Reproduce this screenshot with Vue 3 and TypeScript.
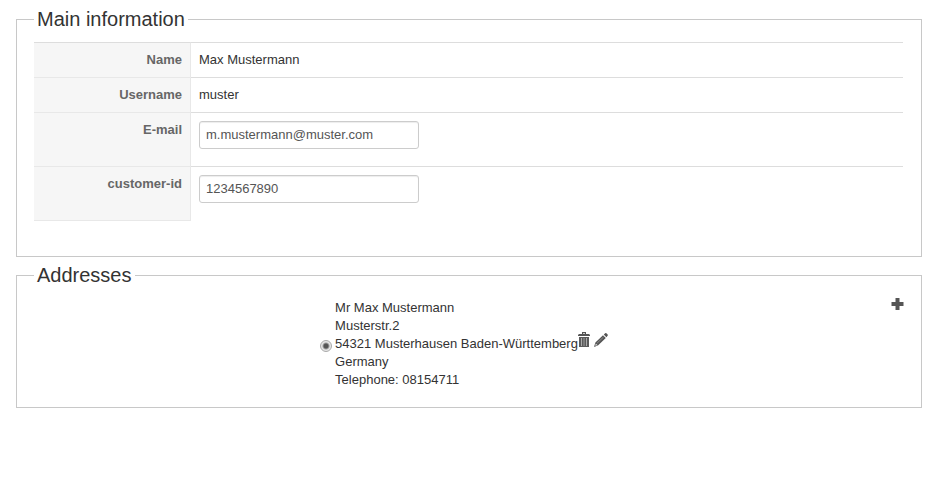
<script setup lang="ts">
import { ref } from 'vue'

const name = 'Max Mustermann'
const username = 'muster'
const email = ref('m.mustermann@muster.com')
const customerId = ref('1234567890')
const selected = ref('home')
</script>

<template>
  <main class="page">
    <fieldset class="panel main-info">
      <legend>Main information</legend>
      <table class="details">
        <tbody>
          <tr><th scope="row">Name</th><td>{{ name }}</td></tr>
          <tr><th scope="row">Username</th><td>{{ username }}</td></tr>
          <tr>
            <th scope="row"><label for="email">E-mail</label></th>
            <td><input id="email" v-model="email" class="field" type="text" /></td>
          </tr>
          <tr>
            <th scope="row"><label for="customer">customer-id</label></th>
            <td><input id="customer" v-model="customerId" class="field" type="text" /></td>
          </tr>
        </tbody>
      </table>
    </fieldset>

    <fieldset class="panel addresses">
      <legend>Addresses</legend>
      <div class="address-row">
        <div class="address">
          <input id="address-home" v-model="selected" class="radio" type="radio" name="address" value="home" />
          <label for="address-home" class="lines">
            <span>Mr Max Mustermann</span>
            <span>Musterstr.2</span>
            <span>54321 Musterhausen Baden-Württemberg</span>
            <span>Germany</span>
            <span>Telephone: 08154711</span>
          </label>
          <div class="actions">
            <button type="button" aria-label="Delete address">
              <svg width="12" height="16" viewBox="0 0 12 16">
                <path fill="#555" d="M4 0h4v2h3l1 1v1H0V3l1-1h3z" />
                <path fill="#ccc" d="M5 1h2v1H5z" />
                <path fill="#5a5a5a" d="M1 5h10v10H1z" />
                <path fill="#aaa" d="M3 6h1v8H3zM8 6h1v8H8z" />
                <path fill="#999" d="M5.5 6h1v8h-1z" />
              </svg>
            </button>
            <button type="button" aria-label="Edit address">
              <svg width="14" height="14" viewBox="0 0 14 14">
                <path fill="#555" d="M9 2.2L11.8 5 4.2 12.2 0 14l1.4-4.4zM9.8 1.5L11.2.3q.6-.5 1.2 0l1.2 1.2q.6.6 0 1.2l-1.2 1.5z" />
                <path stroke="#999" stroke-width=".8" d="M3 10.2l6.5-6.1" />
                <path fill="#ddd" d="M1.9 10.6l1.5 1.5-1.7.7-.5-.5z" />
              </svg>
            </button>
          </div>
        </div>
        <button type="button" class="add" aria-label="Add address">
          <svg width="13" height="12" viewBox="0 0 13 12">
            <path fill="#aaa" d="M4 0h5v4h4v4H9v4H4V8H0V4h4z" />
            <path fill="#555" d="M5 0h3v4h4v4H8v4H5V8H1V4h4z" />
          </svg>
        </button>
      </div>
    </fieldset>
  </main>
</template>

<style>
body {
  margin: 0;
  background: #fff;
}
</style>

<style scoped>
.page {
  padding: 9px 11px 0 16px;
  font: 13px/18px "Liberation Sans", Arial, sans-serif;
  color: #333;
}
.panel {
  margin: 0;
  min-width: 0;
  border: 1px solid #c8c8c8;
  padding: 13px 18px 35px 17px;
}
legend {
  padding: 0 3px;
  font-size: 20px;
  line-height: 20px;
}
.addresses {
  margin-top: 8px;
  padding: 13px 17px 18px;
}
.details {
  width: 100%;
  border-collapse: separate;
  border-spacing: 0;
}
th,
td {
  padding: 8px;
  border-top: 1px solid #ddd;
  vertical-align: top;
  text-align: left;
}
th {
  box-sizing: border-box;
  width: 157px;
  border-right: 1px solid #e8e8e8;
  background: #f6f6f6;
  color: #666;
  text-align: right;
}
tr + tr th {
  border-top-color: #e8e8e8;
}
tr:last-child th {
  border-bottom: 1px solid #e8e8e8;
}
.field {
  display: block;
  box-sizing: border-box;
  width: 220px;
  height: 28px;
  margin: 0 0 9px;
  padding: 3px 6px 5px;
  border: 1px solid #ccc;
  border-radius: 3px;
  box-shadow: inset 0 1px 1px rgba(0, 0, 0, 0.075);
  font: inherit;
  color: #555;
}
tr:last-child .field {
  margin-bottom: 10px;
}
.address-row {
  display: grid;
  grid-template-columns: 1fr auto 1fr;
  align-items: start;
}
.address {
  grid-column: 2;
  display: flex;
  align-items: center;
  padding: 1px 10px 0 0;
}
.radio {
  appearance: none;
  box-sizing: border-box;
  width: 12px;
  height: 12px;
  margin: 4px 3px 0 0;
  border: 1px solid #aaa;
  border-radius: 50%;
  background: #e6e6e6;
}
.radio:checked {
  background: radial-gradient(circle, #555 0 2px, #e6e6e6 4px);
}
.lines {
  display: flex;
  flex-direction: column;
}
button {
  display: block;
  padding: 0;
  border: 0;
  background: none;
  cursor: pointer;
}
svg {
  display: block;
}
.actions {
  display: flex;
  align-items: center;
  gap: 4px;
  margin-bottom: 8px;
}
.add {
  justify-self: end;
}
</style>
